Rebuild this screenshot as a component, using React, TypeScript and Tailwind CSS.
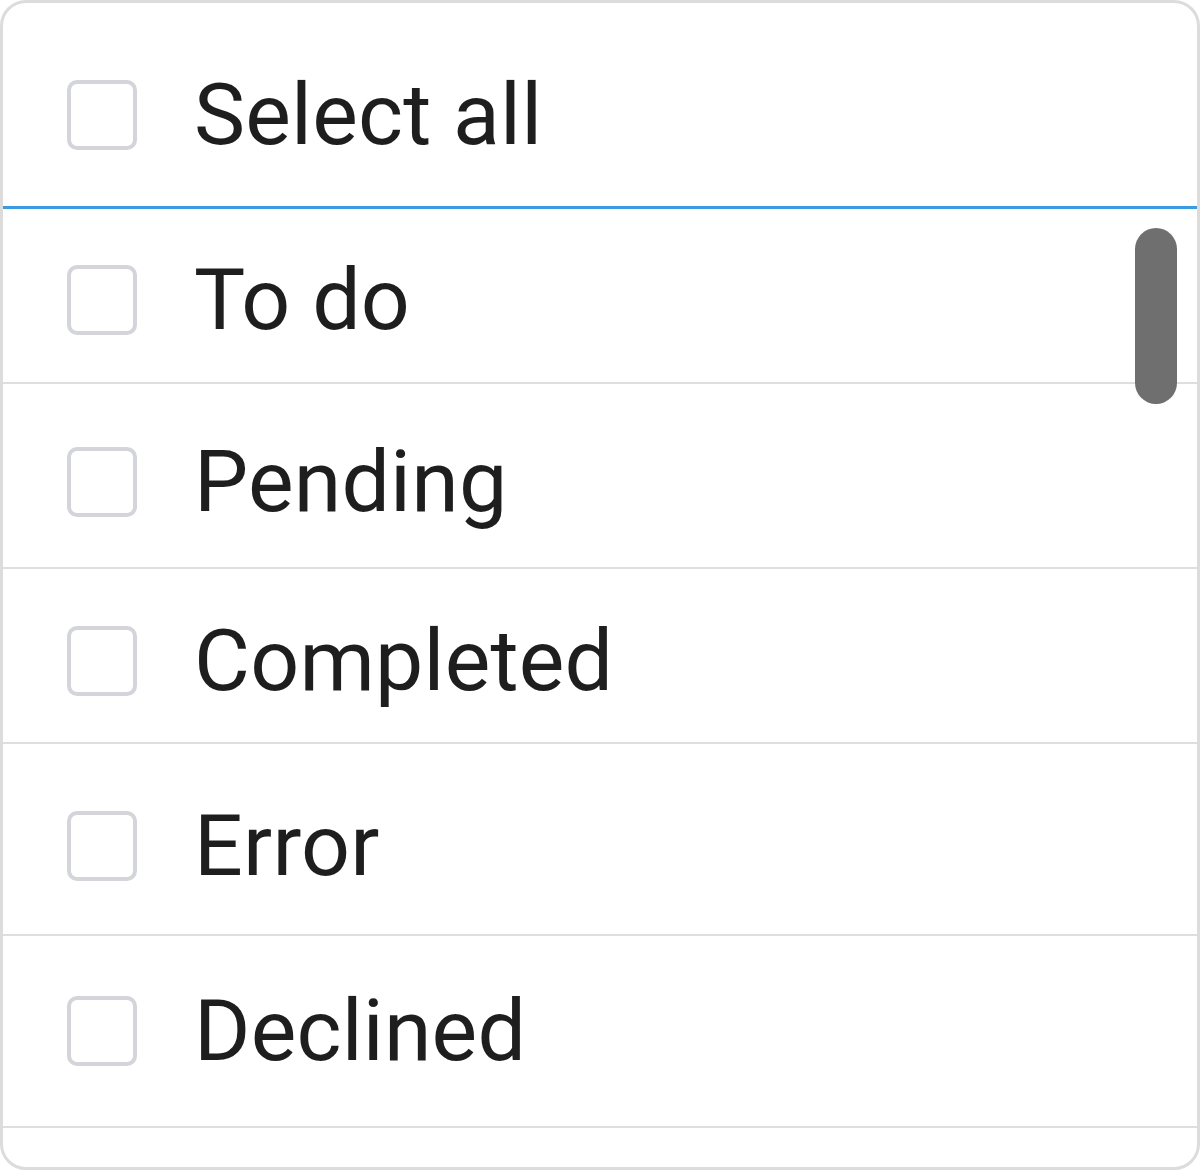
const options = [
  { label: "To do", h: "h-[175px]", pt: "pt-[9px]" },
  { label: "Pending", h: "h-[185px]", pt: "pt-[12px]" },
  { label: "Completed", h: "h-[175px]", pt: "pt-[10px]" },
  { label: "Error", h: "h-[192px]", pt: "pt-[14px]" },
  { label: "Declined", h: "h-[192px]", pt: "pt-0" },
];

function Box() {
  return (
    <span className="block w-[70px] h-[70px] shrink-0 rounded-[10px] border-[4px] border-[#d3d5da] bg-white" />
  );
}

export default function App() {
  return (
    <div
      className="w-[1200px] h-[1170px] bg-white overflow-hidden"
      style={{ fontFamily: "Roboto, 'Noto Sans', sans-serif" }}
    >
      <div className="w-full h-full border-[3px] border-[#dcdcdc] rounded-[26px] overflow-hidden flex flex-col">
        {/* header */}
        <div className="h-[206px] shrink-0 pt-[20px] flex items-center pl-[64px] gap-[57px] border-b-[3px] border-[#3a9be2]">
          <Box />
          <span className="text-[86px] leading-none text-[#1e1e1e] tracking-[0.2px]">Select all</span>
        </div>

        {/* list */}
        <div className="relative flex-1 overflow-hidden">
          {options.map((o) => (
            <div
              key={o.label}
              className={`${o.h} ${o.pt} shrink-0 flex items-center pl-[64px] gap-[57px] border-b-[2px] border-[#dedede]`}
            >
              <Box />
              <span className="text-[86px] leading-none text-[#1e1e1e] tracking-[0.2px]">{o.label}</span>
            </div>
          ))}
          <div className="absolute top-[19px] right-[20px] w-[42px] h-[176px] rounded-full bg-[#6f6f6f]" />
        </div>
      </div>
    </div>
  );
}
